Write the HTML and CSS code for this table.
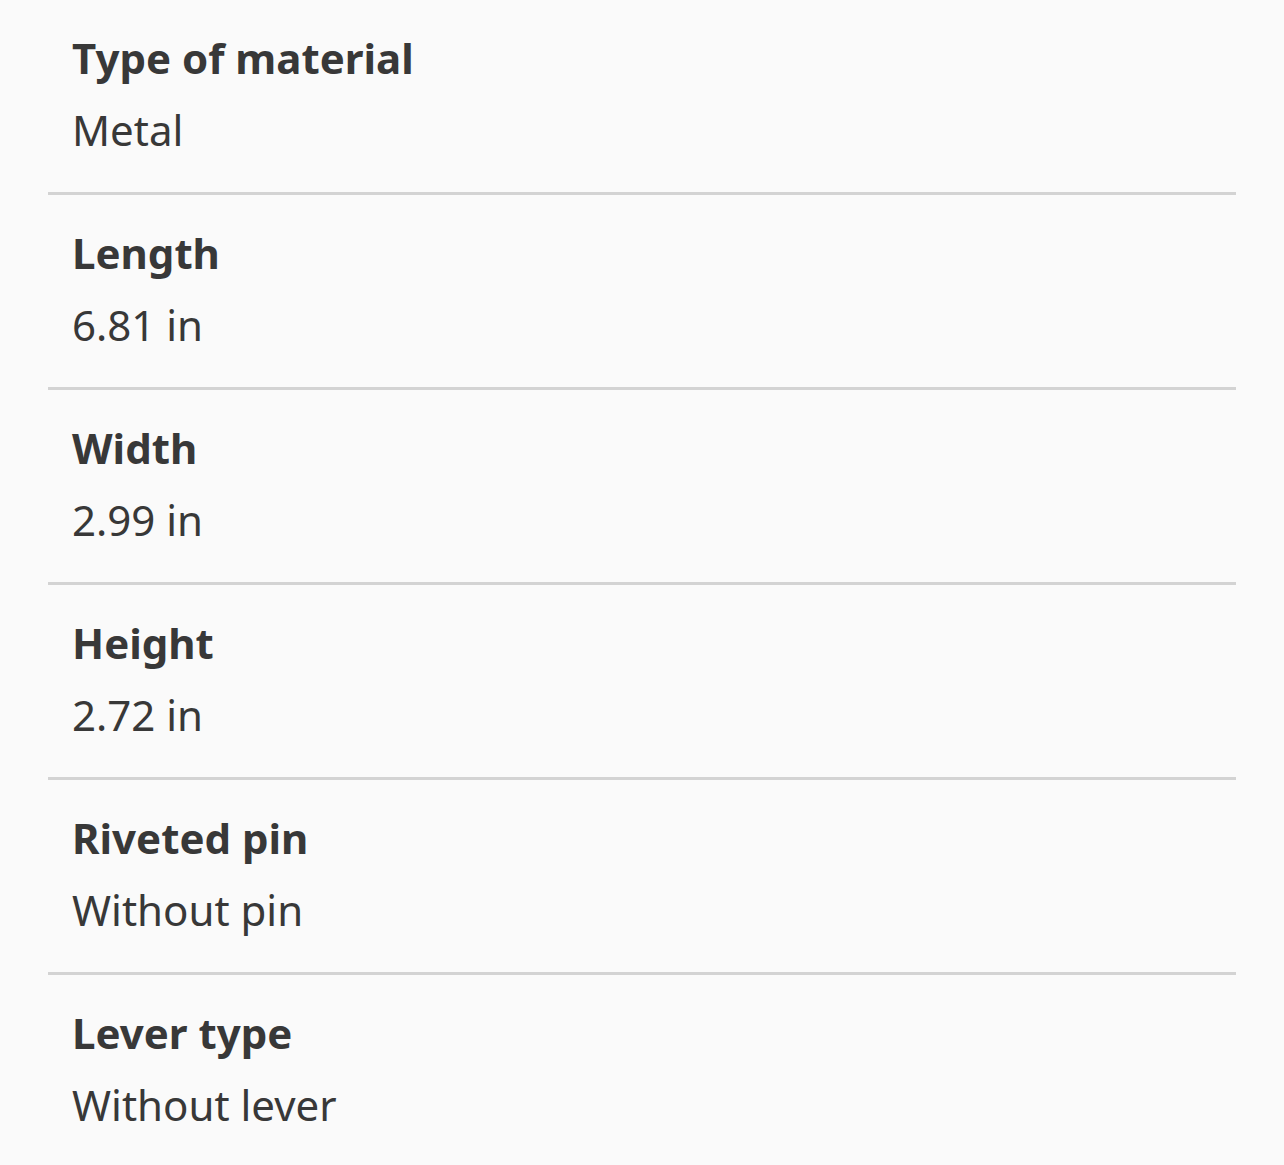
FILE: index.html
```html
<!DOCTYPE html>
<html lang="en">
<head>
  <meta charset="UTF-8">
  <meta name="viewport" content="width=device-width, initial-scale=1.0">
  <title>Product details</title>
  <link rel="stylesheet" href="styles.css">
</head>
<body>

  <dl class="specs">
    <div class="spec-row">
      <dt>Type of material</dt>
      <dd>Metal</dd>
    </div>
    <div class="spec-row">
      <dt>Length</dt>
      <dd>6.81 in</dd>
    </div>
    <div class="spec-row">
      <dt>Width</dt>
      <dd>2.99 in</dd>
    </div>
    <div class="spec-row">
      <dt>Height</dt>
      <dd>2.72 in</dd>
    </div>
    <div class="spec-row">
      <dt>Riveted pin</dt>
      <dd>Without pin</dd>
    </div>
    <div class="spec-row">
      <dt>Lever type</dt>
      <dd>Without lever</dd>
    </div>
  </dl>

</body>
</html>
```

FILE: styles.css
```css
body {
  margin: 0;
  background: #fafafa;
  font-family: 'Noto Sans', 'Open Sans', sans-serif;
  color: #383838;
}

.specs {
  margin: 0 48px;
  padding: 0;
}

.spec-row {
  padding: 22px 24px 26px;
  border-bottom: 3px solid #d3d3d3;
}

.spec-row:last-child {
  border-bottom: none;
}

.spec-row dt,
.spec-row dd {
  margin: 0;
  font-size: 42px;
  line-height: 72px;
}

.spec-row dt {
  font-weight: bold;
}
```
